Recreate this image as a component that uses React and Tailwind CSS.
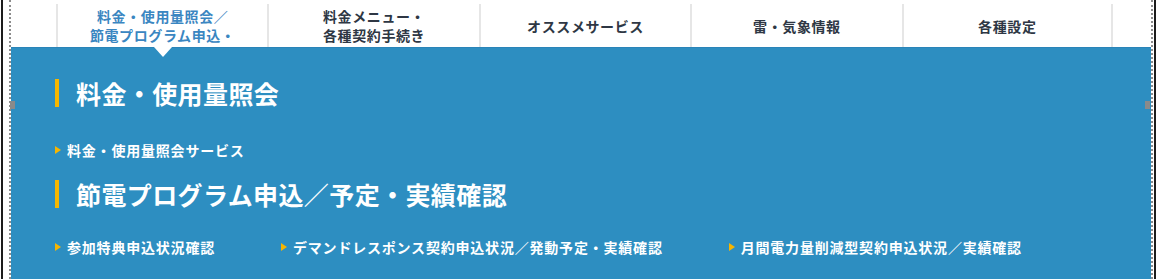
import React from 'react';

const tabs = [
  { lines: ['料金・使用量照会／', '節電プログラム申込・'], active: true },
  { lines: ['料金メニュー・', '各種契約手続き'] },
  { lines: ['オススメサービス'] },
  { lines: ['雷・気象情報'] },
  { lines: ['各種設定'] },
];

function Arrow() {
  return (
    <span className="w-0 h-0 border-y-[4px] border-y-transparent border-l-[6px] border-l-[#f7b500] mr-[6px] shrink-0" />
  );
}

function LinkItem({ children }) {
  return (
    <a className="flex items-center text-[14px] leading-[20px] font-bold text-white tracking-[0.8px] whitespace-nowrap">
      <Arrow />
      {children}
    </a>
  );
}

function Heading({ children }) {
  return (
    <div className="flex items-center">
      <span className="w-[4px] h-[28px] bg-[#f5b700]" />
      <h2 className="ml-[17px] text-[25px] leading-[28px] font-bold text-white tracking-[0.4px]">{children}</h2>
    </div>
  );
}

export default function App() {
  return (
    <div
      className="h-[279px] w-[1156px] bg-white pl-px flex overflow-hidden"
      style={{ fontFamily: '"Noto Sans CJK JP", "Noto Sans", sans-serif' }}
    >
      <div className="flex-1 border-l-2 border-r-2 border-[#1c1c1c] pl-[6px] pr-px flex">
        <div className="flex-1 border-l-2 border-r-2 border-dotted border-[#8c8c8c] relative flex flex-col">
          {/* Nav */}
          <nav className="h-[47px] pt-[4px] pl-[45px] bg-white">
            <div className="w-[1057px] h-full grid grid-cols-5">
              {tabs.map((t, i) => (
                <div
                  key={i}
                  className={
                    'relative flex flex-col items-center justify-center border-l-2 border-[#e6e6e6] text-[14px] leading-[19px] font-bold tracking-[0.6px] pt-[1px] ' +
                    (i === tabs.length - 1 ? 'border-r-2 ' : '') +
                    (t.active ? 'text-[#3a86c1]' : 'text-[#2e3744]')
                  }
                >
                  {t.lines.map((l) => (
                    <span key={l}>{l}</span>
                  ))}
                  {t.active && (
                    <span className="absolute left-1/2 -translate-x-1/2 top-[43px] w-0 h-0 border-x-[9px] border-x-transparent border-t-[10px] border-t-white z-10" />
                  )}
                </div>
              ))}
            </div>
          </nav>

          {/* Panel */}
          <div className="flex-1 bg-[#2d8ec1] border-t border-[#2a84b8] pt-[31px] pl-[44px]">
            <Heading>料金・使用量照会</Heading>
            <div className="mt-[33px]">
              <LinkItem>料金・使用量照会サービス</LinkItem>
            </div>
            <div className="mt-[20px]">
              <Heading>節電プログラム申込／予定・実績確認</Heading>
            </div>
            <div className="mt-[29px] flex gap-[66px]">
              <LinkItem>参加特典申込状況確認</LinkItem>
              <LinkItem>デマンドレスポンス契約申込状況／発動予定・実績確認</LinkItem>
              <LinkItem>月間電力量削減型契約申込状況／実績確認</LinkItem>
            </div>
          </div>

          {/* resize handles */}
          <span className="absolute left-[-1px] top-[101px] w-[5px] h-[8px] bg-[#8a8a8a]" />
          <span className="absolute right-[1px] top-[101px] w-[5px] h-[8px] bg-[#8a8a8a]" />
        </div>
      </div>
    </div>
  );
}
